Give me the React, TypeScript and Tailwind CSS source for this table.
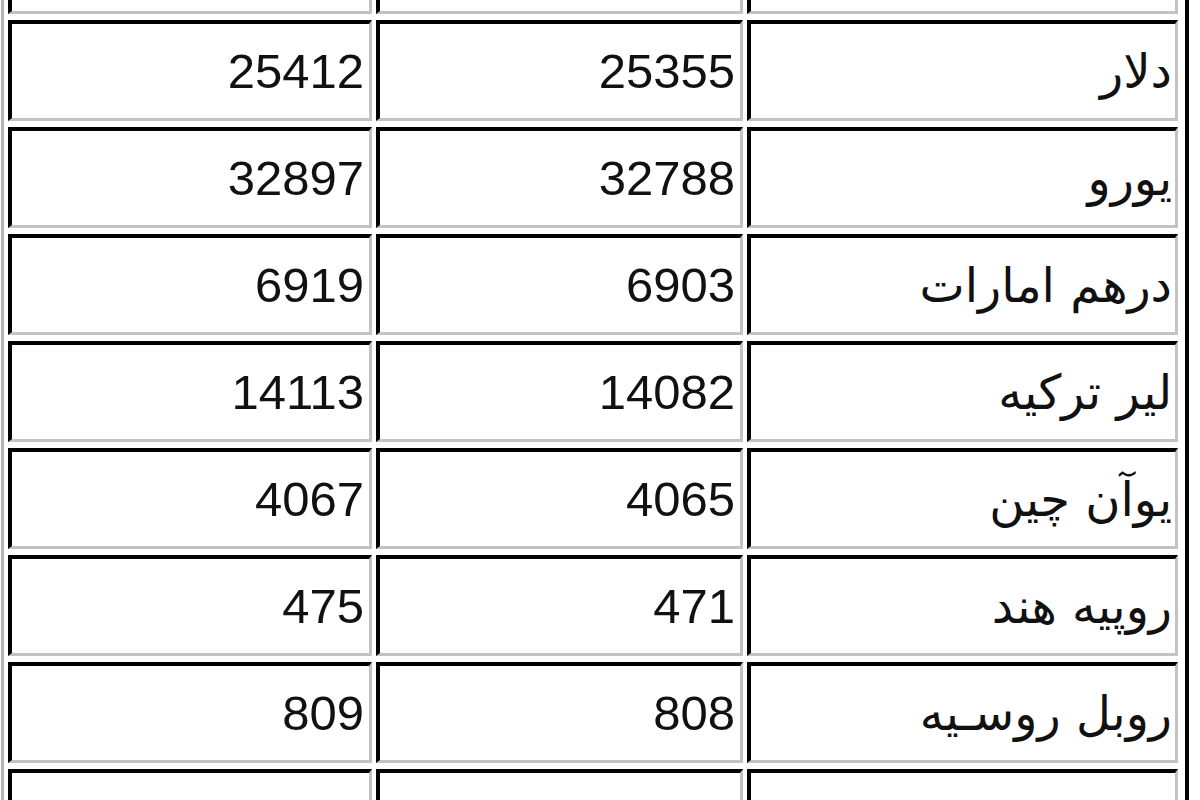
const rows: [string, string, string][] = [
  ["فروش", "خرید", "ارز"],
  ["25412", "25355", "دلار"],
  ["32897", "32788", "یورو"],
  ["6919", "6903", "درهم امارات"],
  ["14113", "14082", "لیر ترکیه"],
  ["4067", "4065", "یوآن چین"],
  ["475", "471", "روپیه هند"],
  ["809", "808", "روبل روسـیه"],
  ["8788", "8752", "ین ژاپن"],
];

const cell =
  "h-[101px] border-t-[4px] border-l-[4px] border-t-black border-l-black border-b-[3px] border-r-[3px] border-b-[#c3c3c3] border-r-[#c3c3c3] bg-white flex items-center justify-end";

export default function App() {
  return (
    <div className="w-[1200px] h-[800px] overflow-hidden bg-white text-[#111]">
      <div className="ml-[1px] w-[1188px] border-l-[3px] border-l-[#b4b4b4] border-r-[4px] border-r-black pl-[4px] pr-[7px] -mt-[87px] pb-[6px]">
        <div className="grid grid-cols-[364px_367px_431px] gap-x-[4px] gap-y-[6px]">
          {rows.map(([sell, buy, name], i) => (
            <div key={i} className="contents">
              <div className={cell + " pr-[5px]"}>
                <span className="text-[49px] leading-none font-['Liberation_Sans',Arial,sans-serif]">{sell}</span>
              </div>
              <div className={cell + " pr-[5px]"}>
                <span className="text-[49px] leading-none font-['Liberation_Sans',Arial,sans-serif]">{buy}</span>
              </div>
              <div className={cell + " pr-[3px]"}>
                <span dir="rtl" className="text-[48px] leading-none font-['DejaVu_Sans',sans-serif]">{name}</span>
              </div>
            </div>
          ))}
        </div>
      </div>
    </div>
  );
}
